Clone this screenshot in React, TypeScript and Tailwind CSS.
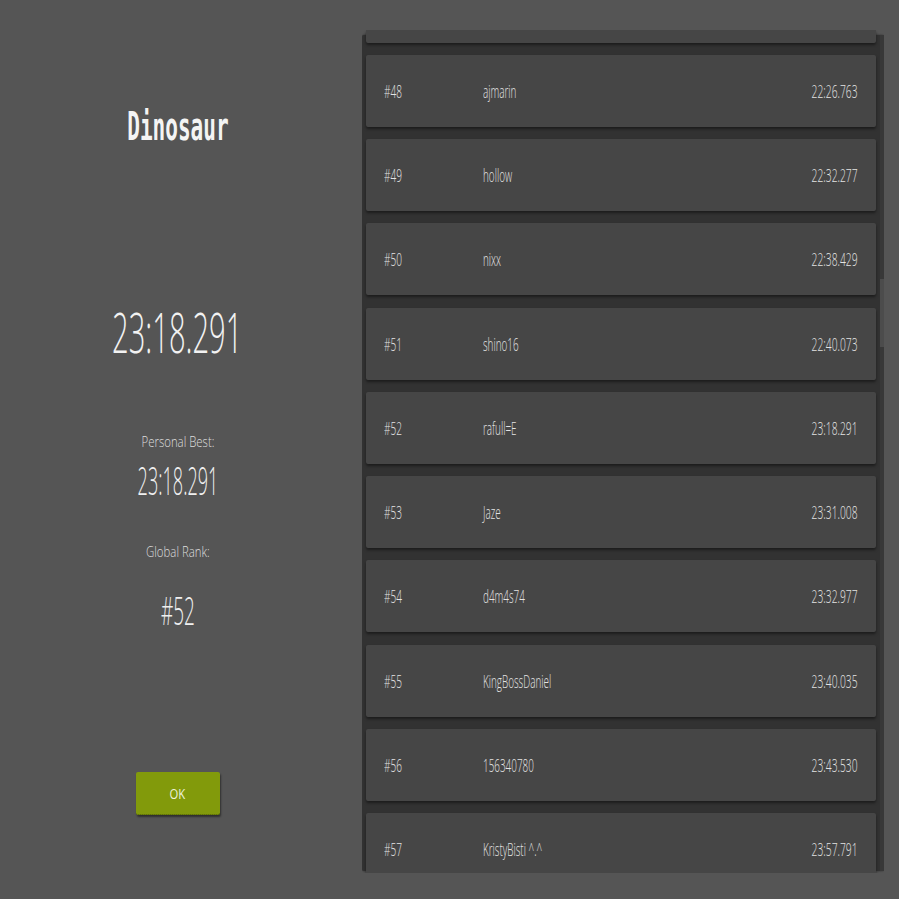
import React from 'react';

const rows = [
  { rank: 48, name: 'ajmarin', time: '22:26.763' },
  { rank: 49, name: 'hollow', time: '22:32.277' },
  { rank: 50, name: 'nixx', time: '22:38.429' },
  { rank: 51, name: 'shino16', time: '22:40.073' },
  { rank: 52, name: 'rafull=E', time: '23:18.291' },
  { rank: 53, name: 'Jaze', time: '23:31.008' },
  { rank: 54, name: 'd4m4s74', time: '23:32.977' },
  { rank: 55, name: 'KingBossDaniel', time: '23:40.035' },
  { rank: 56, name: '156340780', time: '23:43.530' },
  { rank: 57, name: 'KristyBisti ^.^', time: '23:57.791' },
];

const sans = "font-['Open_Sans',sans-serif] font-light";

function Row({ rank, name, time }: { rank: number; name: string; time: string }) {
  return (
    <div className="flex h-[72px] shrink-0 items-center rounded-[2px] bg-[#464646] pl-[18px] pr-[19px] text-[18px] leading-none text-[#e4e4e4] shadow-[0_2px_3px_rgba(0,0,0,0.45)]">
      <span className="w-[99px] shrink-0">
        <span className="inline-block origin-left scale-x-[0.56]">#{rank}</span>
      </span>
      <span className="flex-1 whitespace-nowrap">
        <span className="inline-block origin-left scale-x-[0.55]">{name}</span>
      </span>
      <span className="inline-block origin-right scale-x-[0.57] whitespace-nowrap">{time}</span>
    </div>
  );
}

export default function App() {
  return (
    <div className={`flex h-[899px] w-[899px] overflow-hidden bg-[#555555] ${sans}`}>
      {/* result summary */}
      <div className="flex w-[355px] shrink-0 flex-col items-center text-center">
        <div className="mt-[107px] h-[40px] font-['DejaVu_Sans_Mono',monospace] text-[39px] font-bold leading-[40px] text-[#f4f4f4]">
          <span className="inline-block scale-x-[0.54]">Dinosaur</span>
        </div>
        <div className="mt-[156px] h-[56px] text-[56px] leading-none text-[#f2f2f2]">
          <span className="inline-block scale-x-[0.52]">23:18.291</span>
        </div>
        <div className="mt-[75px] h-[15px] text-[15px] leading-none text-[#dedede]">
          <span className="inline-block scale-x-[0.76] whitespace-nowrap">Personal Best:</span>
        </div>
        <div className="mt-[12px] h-[38px] text-[38px] leading-none text-[#f0f0f0]">
          <span className="inline-block scale-x-[0.475]">23:18.291</span>
        </div>
        <div className="mt-[45px] h-[15px] text-[15px] leading-none text-[#dedede]">
          <span className="inline-block scale-x-[0.76] whitespace-nowrap">Global Rank:</span>
        </div>
        <div className="mt-[32px] h-[38px] text-[38px] leading-none text-[#f0f0f0]">
          <span className="inline-block scale-x-[0.5]">#52</span>
        </div>
        <button className="mt-[143px] flex h-[43px] w-[84px] items-center justify-center rounded-[2px] border-b border-dotted border-[#4f5e06] bg-[#829a0b] text-[15px] font-normal text-[#eef2dc] shadow-[1px_2px_2px_rgba(0,0,0,0.45)]">
          <span className="inline-block scale-x-[0.75]">OK</span>
        </button>
      </div>

      {/* leaderboard */}
      <div className="relative ml-[7px] mt-[30px] h-[843px] w-[522px] shrink-0 overflow-hidden">
        <div className="absolute inset-x-0 bottom-[2px] top-[5px] rounded-[2px] bg-[#323232] shadow-[0_0_2px_rgba(0,0,0,0.5)]" />
        <div className="relative flex h-full">
          <div className="flex w-[518px] flex-col gap-[12.25px] px-[4px]">
            <div className="h-[12.5px] shrink-0 rounded-b-[2px] bg-[#464646] shadow-[0_2px_3px_rgba(0,0,0,0.45)]" />
            {rows.map((r) => (
              <Row key={r.rank} {...r} />
            ))}
          </div>
          <div className="mb-[2px] mt-[5px] w-[4px] bg-[#383838]">
            <div className="mt-[244px] h-[68px] bg-[#4c4c4c]" />
          </div>
        </div>
      </div>
    </div>
  );
}
